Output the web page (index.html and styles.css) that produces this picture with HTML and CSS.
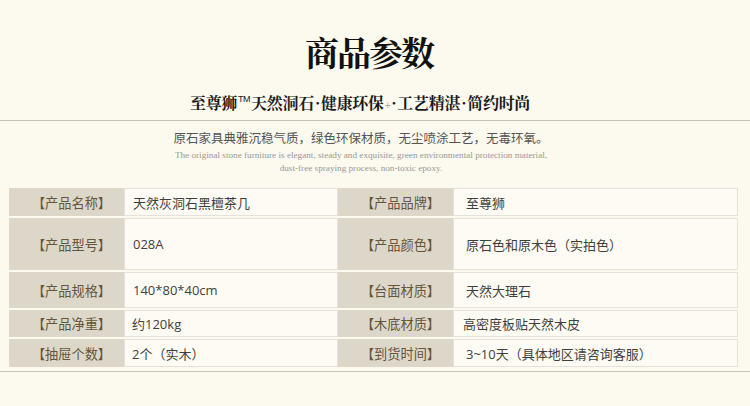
FILE: index.html
```html
<!DOCTYPE html>
<html lang="zh">
<head>
<meta charset="utf-8">
<link rel="stylesheet" href="styles.css">
</head>
<body>
<div class="page">
  <header class="head">
    <h1 class="title">商品参数</h1>
    <p class="slogan">至尊狮<sup class="tm">TM</sup>天然洞石<span class="dot">·</span>健康环保<span class="plus">+</span><span class="dot">·</span>工艺精湛<span class="dot">·</span>简约时尚</p>
  </header>
  <hr class="rule">
  <section class="intro">
    <p class="intro-cn">原石家具典雅沉稳气质，绿色环保材质，无尘喷涂工艺，无毒环氧。</p>
    <p class="intro-en">The original stone furniture is elegant, steady and exquisite, green environmental protection material,<br>dust-free spraying process, non-toxic epoxy.</p>
  </section>
  <div class="params">
    <div class="lab">【产品名称】</div><div class="val">天然灰洞石黑檀茶几</div><div class="lab">【产品品牌】</div><div class="val wide">至尊狮</div>
    <div class="lab">【产品型号】</div><div class="val">028A</div><div class="lab">【产品颜色】</div><div class="val wide">原石色和原木色（实拍色）</div>
    <div class="lab">【产品规格】</div><div class="val">140*80*40cm</div><div class="lab">【台面材质】</div><div class="val wide">天然大理石</div>
    <div class="lab">【产品净重】</div><div class="val tight">约120kg</div><div class="lab">【木底材质】</div><div class="val mid">高密度板贴天然木皮</div>
    <div class="lab">【抽屉个数】</div><div class="val tight">2个（实木）</div><div class="lab">【到货时间】</div><div class="val wide">3~10天（具体地区请咨询客服）</div>
  </div>
  <hr class="rule bottom">
</div>
</body>
</html>
```

FILE: styles.css
```css
* { box-sizing: border-box; }
html, body { margin: 0; padding: 0; }
body {
  background: #fcf9ee;
  width: 750px;
  height: 406px;
  overflow: hidden;
  font-family: "Open Sans", "Noto Sans CJK SC", sans-serif;
}
.page { width: 750px; }
.head { padding-top: 32px; text-align: center; }
.title {
  margin: 0;
  height: 40px;
  line-height: 40px;
  font-family: "Noto Serif CJK SC", "Noto Sans CJK SC", serif;
  font-size: 34px;
  font-weight: 700;
  letter-spacing: -2px;
  color: #111;
  padding-right: 12px;
}
.slogan {
  margin: 21px 0 0;
  height: 20px;
  line-height: 20px;
  font-family: "Noto Serif CJK SC", "Noto Sans CJK SC", serif;
  font-size: 16px;
  font-weight: 700;
  color: #1a1a1a;
  letter-spacing: -0.3px;
  padding-right: 30px;
}
.tm {
  font-family: "Liberation Sans", sans-serif;
  font-size: 9px;
  font-weight: 400;
  vertical-align: 7px;
  line-height: 0;
  letter-spacing: -0.5px;
  margin: 0 1px;
}
.dot { font-weight: 700; margin: 0 1px; }
.plus {
  font-family: "Liberation Sans", sans-serif;
  font-size: 10px;
  font-weight: 400;
  color: #aaa;
  margin-left: 1px;
}
.rule {
  margin: 7px 0 0;
  border: 0;
  height: 1px;
  background: #c6c2b9;
}
.intro { text-align: center; padding-right: 28px; }
.intro-cn {
  margin: 8px 0 0;
  height: 18px;
  line-height: 18px;
  font-family: "Noto Sans CJK SC", sans-serif;
  font-size: 12.5px;
  color: #555;
}
.intro-en {
  margin: 2px 0 0;
  line-height: 13px;
  font-family: "Liberation Serif", serif;
  font-size: 9.2px;
  color: #999;
}
.params {
  margin: 13px 0 0 9px;
  width: 729px;
  display: grid;
  grid-template-columns: 115px 214px 115px 285px;
  grid-template-rows: 28px 52px 36px 27px 28px;
  row-gap: 2px;
  font-size: 13px;
}
.lab {
  background: #ddd7c9;
  color: #65553a;
  display: flex;
  align-items: center;
  justify-content: center;
  padding-left: 10px;
  font-family: "Noto Sans CJK SC", sans-serif;
  font-size: 13.2px;
}
.val {
  background: #fdfbf3;
  border: 1px solid #e6e2db;
  color: #3f3f3f;
  display: flex;
  align-items: center;
  padding-left: 8px;
}
.val.tight { padding-left: 7px; }
.val.wide { padding-left: 12px; }
.val.mid { padding-left: 9px; }
.rule.bottom { margin-top: 4px; background: #c9c5bd; }
```
